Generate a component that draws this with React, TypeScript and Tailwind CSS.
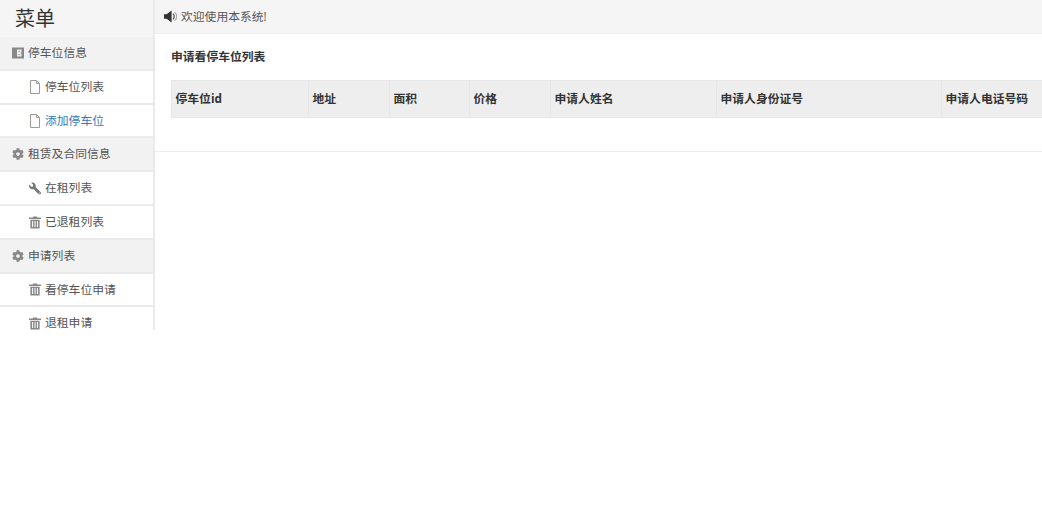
import { FaCog, FaWrench } from "react-icons/fa";

const font = { fontFamily: '"Open Sans", "Noto Sans CJK SC", sans-serif' };

function BookIcon() {
  return (
    <svg width="12" height="12" viewBox="0 0 12 12">
      <path fill="#888" fillRule="evenodd" d="M0 .5h12v11H0zM5 2.5v7h4.5V6.6H8.6V5.4h.9V2.5z" />
      <path fill="#999" d="M6.4 3.8h1.4v1.2H6.4zM6.4 7h1.4v1.2H6.4z" />
    </svg>
  );
}

function FileIcon() {
  return (
    <svg width="12" height="14" viewBox="0 0 12 14" fill="none" stroke="#a09a94" strokeWidth="1">
      <path d="M1.5.5h6l3 3v10h-9z" />
      <path d="M7.5.5v3h3" />
    </svg>
  );
}

function TrashIcon() {
  return (
    <svg width="13" height="13" viewBox="0 0 13 13">
      <path fill="#888" fillRule="evenodd" d="M4.5 0h4l.6 1.2H13v1.6H0V1.2h3.9zM1.5 3.6h10V13h-10zM3.4 5v6.4h1.1V5zM6 5v6.4h1.1V5zM8.6 5v6.4h1.1V5z" />
    </svg>
  );
}

function SpeakerIcon() {
  return (
    <svg width="13" height="13" viewBox="0 0 13 13">
      <path fill="#333" d="M0 4.2h2.6L7.6.4v12.2l-5-3.8H0z" />
      <path fill="none" stroke="#555" strokeWidth="1.3" d="M9 3.6c1.6 1.5 1.6 4.3 0 5.8" />
      <path fill="none" stroke="#888" strokeWidth="1" d="M10.8 2.2c2.4 2.4 2.4 6.2 0 8.6" />
    </svg>
  );
}

function Group({ icon, label, h = "h-[34px]" }: { icon: React.ReactNode; label: string; h?: string }) {
  return (
    <div className={`flex ${h} items-center gap-[4px] border-b-2 border-[#eaeaea] bg-[#f2f2f2] pl-[12px]`}>
      <span className="flex w-[12px] justify-center text-[#888]">{icon}</span>
      <span>{label}</span>
    </div>
  );
}

function Item({ icon, label, active = false, h = "h-[34px]" }: { icon: React.ReactNode; label: string; active?: boolean; h?: string }) {
  return (
    <div className={`flex ${h} items-center gap-[4px] border-b-2 border-[#ebebeb] bg-white pl-[29px]`}>
      <span className="flex w-[12px] justify-center text-[#888]">{icon}</span>
      <span className={active ? "text-[#337ab7]" : ""}>{label}</span>
    </div>
  );
}

const columns = [
  { label: "停车位id", w: "w-[137px]" },
  { label: "地址", w: "w-[81px]" },
  { label: "面积", w: "w-[80px]" },
  { label: "价格", w: "w-[81px]" },
  { label: "申请人姓名", w: "w-[166px]" },
  { label: "申请人身份证号", w: "w-[225px]" },
  { label: "申请人电话号码", w: "w-[110px]" },
];

export default function App() {
  return (
    <div className="flex h-[526px] w-[1042px] items-start overflow-hidden bg-white text-[11.8px] text-[#555]" style={font}>
      <aside className="h-[330px] w-[155px] shrink-0 overflow-hidden border-r-2 border-[#eaeaea]">
        <div className="flex h-[37px] items-center bg-[#f5f5f5] pl-[15px] text-[20px] leading-none text-[#333]">菜单</div>
        <Group icon={<BookIcon />} label="停车位信息" />
        <Item icon={<FileIcon />} label="停车位列表" />
        <Item icon={<FileIcon />} label="添加停车位" active h="h-[33px]" />
        <Group icon={<FaCog size={14} />} label="租赁及合同信息" />
        <Item icon={<FaWrench size={13} className="-scale-x-100 text-[#777]" />} label="在租列表" />
        <Item icon={<TrashIcon />} label="已退租列表" />
        <Group icon={<FaCog size={14} />} label="申请列表" />
        <Item icon={<TrashIcon />} label="看停车位申请" h="h-[33px]" />
        <Item icon={<TrashIcon />} label="退租申请" />
      </aside>
      <main className="min-w-0 flex-1">
        <div className="flex h-[34px] items-center gap-[4px] border-b border-[#eeeeee] bg-[#f5f5f5] pl-[9px]">
          <SpeakerIcon />
          <span>欢迎使用本系统!</span>
        </div>
        <div className="border-b border-[#eeeeee] pb-[33px] pl-[16px]">
          <h2 className="flex h-[46px] items-center text-[11.8px] font-bold text-[#333]">申请看停车位列表</h2>
          <div className="flex h-[38px] w-[880px] border border-[#e8e8e8] bg-[#eeeeee]">
            {columns.map((c) => (
              <div key={c.label} className={`${c.w} flex shrink-0 items-center border-r border-[#e6e6e6] pl-[3.5px] font-bold text-[#333] last:border-r-0`}>
                {c.label}
              </div>
            ))}
          </div>
        </div>
      </main>
    </div>
  );
}
